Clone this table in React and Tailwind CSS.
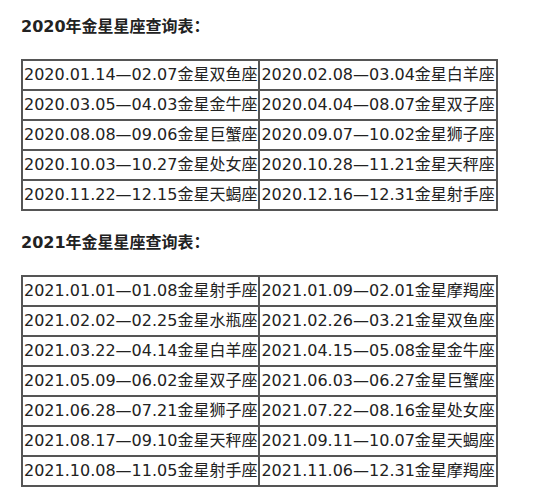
import React from "react";

const t2020 = [
  ["2020.01.14—02.07金星双鱼座", "2020.02.08—03.04金星白羊座"],
  ["2020.03.05—04.03金星金牛座", "2020.04.04—08.07金星双子座"],
  ["2020.08.08—09.06金星巨蟹座", "2020.09.07—10.02金星狮子座"],
  ["2020.10.03—10.27金星处女座", "2020.10.28—11.21金星天秤座"],
  ["2020.11.22—12.15金星天蝎座", "2020.12.16—12.31金星射手座"],
];

const t2021 = [
  ["2021.01.01—01.08金星射手座", "2021.01.09—02.01金星摩羯座"],
  ["2021.02.02—02.25金星水瓶座", "2021.02.26—03.21金星双鱼座"],
  ["2021.03.22—04.14金星白羊座", "2021.04.15—05.08金星金牛座"],
  ["2021.05.09—06.02金星双子座", "2021.06.03—06.27金星巨蟹座"],
  ["2021.06.28—07.21金星狮子座", "2021.07.22—08.16金星处女座"],
  ["2021.08.17—09.10金星天秤座", "2021.09.11—10.07金星天蝎座"],
  ["2021.10.08—11.05金星射手座", "2021.11.06—12.31金星摩羯座"],
];

function Table({ rows }) {
  return (
    <table className="border-separate border-spacing-0 border border-[#555]">
      <tbody>
        {rows.map((r, i) => (
          <tr key={i}>
            {r.map((c, j) => (
              <td
                key={j}
                className="border border-[#555] h-[30px] p-[1px] whitespace-nowrap text-[16px] leading-[26px] text-[#222]"
              >
                {c}
              </td>
            ))}
          </tr>
        ))}
      </tbody>
    </table>
  );
}

export default function App() {
  return (
    <div
      className="bg-white w-[536px] h-[500px] overflow-hidden pl-[21px] pt-[15px] flex flex-col items-start gap-[20px]"
      style={{ fontFamily: '"DejaVu Sans", "Noto Sans CJK SC", sans-serif' }}
    >
      <h2 className="text-[16px] leading-[24px] font-bold text-[#222]">2020年金星星座查询表：</h2>
      <Table rows={t2020} />
      <h2 className="text-[16px] leading-[24px] font-bold text-[#222]">2021年金星星座查询表：</h2>
      <Table rows={t2021} />
    </div>
  );
}
